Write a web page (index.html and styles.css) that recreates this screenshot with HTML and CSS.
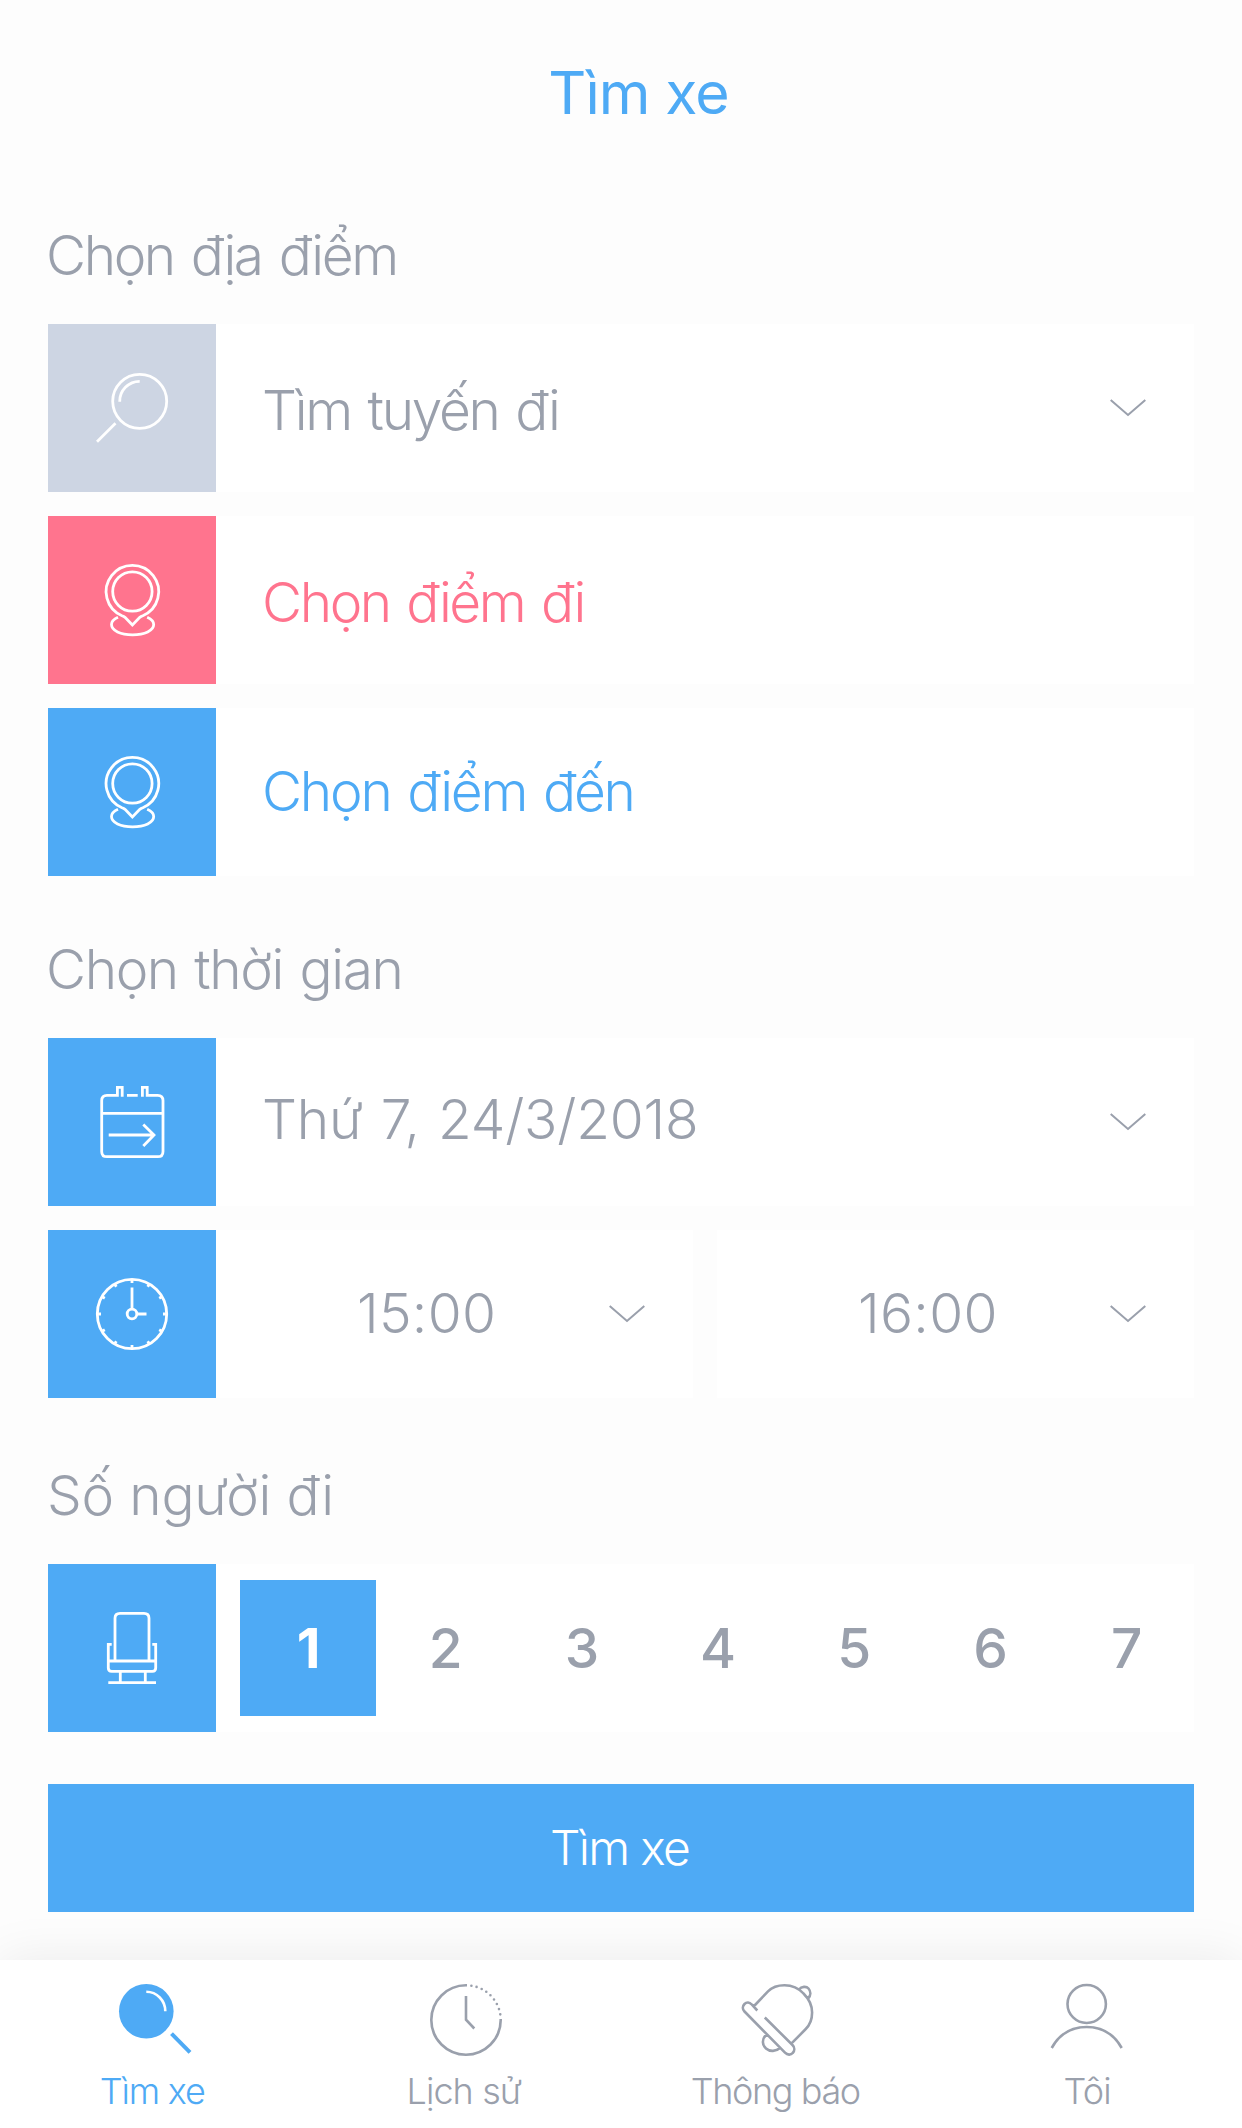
FILE: index.html
```html
<!DOCTYPE html>
<html lang="vi">
<head>
<meta charset="utf-8">
<title>Tìm xe</title>
<link rel="stylesheet" href="styles.css">
</head>
<body>
<div class="screen">
  <header class="header"><h1 class="title">Tìm xe</h1></header>
  <main class="content">
    <section class="group">
      <h2 class="heading"><span class="t-place">Chọn địa điểm</span></h2>
      <div class="row">
        <span class="tile tile-muted"><svg class="tile-icon" viewBox="0 0 168 168"><circle cx="91.7" cy="77.3" r="27"/><path d="M71.7 77.7A20 20 0 0 1 91.7 57.3M67.5 99.3L49 117.7"/></svg></span>
        <div class="field"><span class="t-route">Tìm tuyến đi</span><svg class="chevron" viewBox="0 0 36 18"><path d="M.7 1L18 16L35.3 1"/></svg></div>
      </div>
      <div class="row">
        <span class="tile tile-pink"><svg class="tile-icon" viewBox="0 0 168 168"><circle cx="84.4" cy="75.5" r="19.7"/><path d="M84.4 109L77 101.3Q76 100.5 74 99.8A26.3 26.3 0 1 1 94.8 99.8Q92.8 100.5 91.8 101.3ZM70 101.2C66 103 63.5 105.5 63.5 108.5C63.5 114.5 72.5 118.8 84.6 118.8S105.7 114.5 105.7 108.5C105.7 105.5 103.2 103 99.2 101.2"/></svg></span>
        <div class="field pink"><span class="t-from">Chọn điểm đi</span></div>
      </div>
      <div class="row">
        <span class="tile"><svg class="tile-icon" viewBox="0 0 168 168"><circle cx="84.4" cy="75.5" r="19.7"/><path d="M84.4 109L77 101.3Q76 100.5 74 99.8A26.3 26.3 0 1 1 94.8 99.8Q92.8 100.5 91.8 101.3ZM70 101.2C66 103 63.5 105.5 63.5 108.5C63.5 114.5 72.5 118.8 84.6 118.8S105.7 114.5 105.7 108.5C105.7 105.5 103.2 103 99.2 101.2"/></svg></span>
        <div class="field blue"><span class="t-to">Chọn điểm đến</span></div>
      </div>
    </section>
    <section class="group group-time">
      <h2 class="heading"><span class="t-time">Chọn thời gian</span></h2>
      <div class="row">
        <span class="tile"><svg class="tile-icon" viewBox="0 0 168 168"><path d="M74.2 58.8V49.4H69.4V57.3H59Q53.7 57.3 53.7 62.6V113.4Q53.7 118.7 59 118.7H109.7Q115 118.7 115 113.4V62.6Q115 57.3 109.7 57.3H99.2V49.4H94.4V58.8M79 57.3H89.7M53.7 75.3H115M60.7 97H106M95.3 86.5L106 97L95.3 108"/></svg></span>
        <div class="field"><span class="t-date">Thứ 7, 24/3/2018</span><svg class="chevron" viewBox="0 0 36 18"><path d="M.7 1L18 16L35.3 1"/></svg></div>
      </div>
      <div class="row">
        <span class="tile"><svg class="tile-icon" viewBox="0 0 168 168"><circle cx="84" cy="84" r="34.7"/><circle cx="84" cy="84" r="4.8"/><path d="M84 79V57.5M89 84H98.5"/><path d="M84 49v4M84 115v4M49 84h4M115 84h4M66.5 53.7l1.8 3.1M99.7 111.2l1.8 3.1M53.7 66.5l3.1 1.8M111.2 99.7l3.1 1.8M101.5 53.7l-1.8 3.1M68.3 111.2l-1.8 3.1M114.3 66.5l-3.1 1.8M56.8 99.7l-3.1 1.8"/></svg></span>
        <div class="times">
          <div class="field time"><span class="t-clock">15:00</span><svg class="chevron" viewBox="0 0 36 18"><path d="M.7 1L18 16L35.3 1"/></svg></div>
          <div class="field time"><span class="t-clock">16:00</span><svg class="chevron" viewBox="0 0 36 18"><path d="M.7 1L18 16L35.3 1"/></svg></div>
        </div>
      </div>
    </section>
    <section class="group group-people">
      <h2 class="heading"><span class="t-people">Số người đi</span></h2>
      <div class="row">
        <span class="tile"><svg class="tile-icon" viewBox="0 0 168 168"><path d="M67 97V54.3Q67 49.3 72 49.3H96Q101 49.3 101 54.3V97M63.7 80.3H60.3V104Q60.3 107.3 63.7 107.3H104.3Q107.7 107.3 107.7 104V80.3H104.3M60.3 97H107.7M72.3 107.3V118.7M97.3 107.3V118.7M60.3 118.7H108"/></svg></span>
        <div class="counts"><span class="count active">1</span><span class="count">2</span><span class="count">3</span><span class="count">4</span><span class="count">5</span><span class="count">6</span><span class="count">7</span></div>
      </div>
    </section>
    <button class="submit"><span class="t-submit">Tìm xe</span></button>
  </main>
  <nav class="tabs">
    <a class="tab blue"><svg class="tab-icon" viewBox="0 0 72 72"><circle class="solid" cx="27.3" cy="27.3" r="27.3"/><path class="shine" d="M27.3 7.8A19 19.3 0 0 1 46.3 27.2"/><path class="handle" d="M52.5 49.7L71 68.3"/></svg><span class="label l-find">Tìm xe</span></a>
    <a class="tab"><svg class="tab-icon" viewBox="0 0 72 72"><path d="M37 1.3H36A34.7 34.7 0 1 0 70.7 36V35"/><path class="dots" d="M41.4 1.7A34.7 34.7 0 0 1 70.5 32"/><path d="M36 12V35.7L44.3 44.5"/></svg><span class="label l-history">Lịch sử</span></a>
    <a class="tab"><svg class="tab-icon" viewBox="-1.5 0 72 72"><path d="M12.6 22L26.5 7.3C31 2.8 37 1.2 43 1.2C51 1.2 57.5 4.5 62 9.5C67.5 15 70.6 21 70.6 28.5C70.6 35.5 68.5 41 64 45.3L49.8 59.7M15.8 26.5L10.2 20.5C8 18 5 18 3 20C.8 22.2 .8 25.2 3 27.5L43.5 68.7C46 71.2 49.3 71.2 51.2 69C53.3 66.8 53.3 63.3 51 61L23.3 33.5M25 50.5C20 55 20.5 61 24.5 64.5C28.5 68 34.5 67.5 38.5 64M57.5 5.5C60 2.2 65 2.2 67 4.5C69.5 7.5 69.5 11.5 66.6 14.5"/></svg><span class="label l-notice">Thông báo</span></a>
    <a class="tab"><svg class="tab-icon" viewBox="-.4 0 72 72"><ellipse cx="35.3" cy="20" rx="19.2" ry="19"/><path d="M.3 64C8 50 20 43 35.3 43S62.5 50 70.3 64"/></svg><span class="label l-me">Tôi</span></a>
  </nav>
</div>
</body>
</html>
```
FILE: styles.css
```css
* { box-sizing: border-box; }
body { margin: 0; background: #fdfdfd; color: #9aa0ac; font-family: Inter, "Liberation Sans", sans-serif; font-weight: 300; font-size: 55px; }
.screen { height: 2128px; display: flex; flex-direction: column; overflow: hidden; }
h1, h2 { margin: 0; font-weight: inherit; font-size: inherit; }
span { white-space: nowrap; }
.header { height: 188px; padding: 0 0 2px 35px; display: flex; align-items: center; justify-content: center; }
.title { color: #4eaaf5; font-size: 59px; font-weight: 400; line-height: 72px; letter-spacing: -.9px; }
.content { flex: 1; padding: 0 48px; display: flex; flex-direction: column; }
.group { display: flex; flex-direction: column; gap: 24px; margin-bottom: 26px; }
.group-time { margin-bottom: 30px; }
.group-people { margin-bottom: 52px; }
.heading { height: 112px; line-height: 134px; margin-left: -2px; }
.group-people .heading { margin-left: -1px; }
.row { display: flex; height: 168px; }
.tile { width: 168px; height: 168px; flex: none; background: #4eaaf5; }
.tile-muted { background: #cdd5e3; }
.tile-pink { background: #ff748e; }
.tile-icon { display: block; width: 168px; height: 168px; fill: none; stroke: #fff; stroke-width: 2.8; }
.field { flex: 1; display: flex; align-items: center; justify-content: space-between; padding: 0 48px 0 46px; background: #fff; }
.pink { color: #ff748e; }
.blue { color: #4eaaf5; }
.chevron { width: 36px; height: 18px; fill: none; stroke: #9aa0ac; stroke-width: 2; }
.times { flex: 1; display: flex; gap: 24px; }
.time { padding-left: 141px; }
.counts { flex: 1; display: grid; grid-template-columns: repeat(7, 136.2px); align-items: center; padding-left: 24px; background: #fff; }
.count { height: 136px; line-height: 137px; text-align: center; font-weight: 450; padding-left: 3px; }
.active { background: #4eaaf5; color: #fff; font-weight: 700; padding-left: 1px; }
.submit { height: 128px; border: 0; padding: 0 3px 2px 0; background: #4eaaf5; color: #fff; font: inherit; font-size: 48px; }
.tabs { height: 168px; display: flex; background: #fff; box-shadow: 0 0 48px rgba(0, 30, 15, .08); }
.tab { flex: 1; display: flex; flex-direction: column; align-items: center; padding-top: 24px; }
.tab-icon { width: 72px; height: 72px; fill: none; stroke: #9aa0ac; stroke-width: 2.6; overflow: visible; }
.tab-icon .solid { fill: #4eaaf5; stroke: none; }
.tab-icon .shine { stroke: #fff; stroke-width: 2.6; }
.tab-icon .handle { stroke: #4eaaf5; stroke-width: 4; }
.tab-icon .dots { stroke-linecap: round; stroke-dasharray: 0 5.4; }
.label { font-size: 36px; line-height: 44px; margin-top: 13px; }

/* Optical spacing per label */
.t-place { letter-spacing: -2.4px; word-spacing: 4px; }
.t-route { letter-spacing: -2.3px; word-spacing: 3.5px; padding-top: 4px; }
.t-from { letter-spacing: -2.4px; word-spacing: 3.5px; padding-top: 4px; }
.t-to { letter-spacing: -2.2px; word-spacing: 3.5px; padding-bottom: 2px; }
.t-time { letter-spacing: -1.4px; word-spacing: 2.5px; }
.t-date { letter-spacing: -.2px; word-spacing: 3px; padding-bottom: 6px; }
.t-clock { letter-spacing: .3px; padding-bottom: 2px; }
.t-people { letter-spacing: -.2px; }
.t-submit { letter-spacing: -1.7px; }
.l-find { letter-spacing: -1.2px; margin-left: -6px; }
.l-history { letter-spacing: -.9px; margin-left: -4px; }
.l-notice { letter-spacing: -1.4px; margin-left: -2px; }
.l-me { letter-spacing: -.8px; margin-left: 1px; }
```
